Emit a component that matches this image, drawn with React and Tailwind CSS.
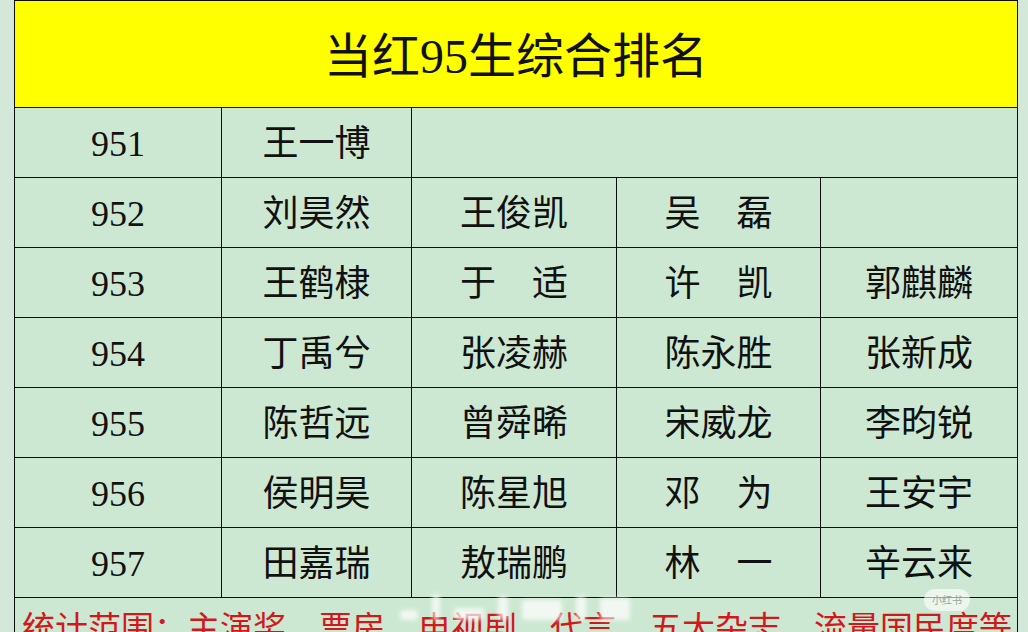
import React from 'react';

const rows = [
  ['951', '王一博'],
  ['952', '刘昊然', '王俊凯', '吴　磊', ''],
  ['953', '王鹤棣', '于　适', '许　凯', '郭麒麟'],
  ['954', '丁禹兮', '张凌赫', '陈永胜', '张新成'],
  ['955', '陈哲远', '曾舜晞', '宋威龙', '李昀锐'],
  ['956', '侯明昊', '陈星旭', '邓　为', '王安宇'],
  ['957', '田嘉瑞', '敖瑞鹏', '林　一', '辛云来'],
];

const font = { fontFamily: '"Liberation Serif", "Noto Sans CJK SC", serif' };

function Cell({ children, span }) {
  return (
    <div
      className={`h-[70px] border-l border-t border-[#0d0d0d] flex items-center justify-center pt-[3px] text-[36px] leading-none text-[#111] ${span ? 'col-span-3' : ''}`}
    >
      {children}
    </div>
  );
}

export default function App() {
  return (
    <div className="relative w-[1028px] h-[632px] overflow-hidden bg-[#d3e8d9]" style={font}>
      <div className="ml-[14px] w-[1004px] border-r border-[#0d0d0d] bg-[#cde8d2]">
        {/* title */}
        <div className="h-[107px] border-l border-t border-[#0d0d0d] bg-[#ffff00] flex items-center justify-center pt-[6px]">
          <span className="text-[48px] leading-none text-[#111]">当红95生综合排名</span>
        </div>

        {/* ranking rows */}
        <div className="grid grid-cols-[207px_190px_205px_204px_197px]">
          {rows.map((r) =>
            r.length === 2 ? (
              <React.Fragment key={r[0]}>
                <Cell>{r[0]}</Cell>
                <Cell>{r[1]}</Cell>
                <Cell span />
              </React.Fragment>
            ) : (
              r.map((v, i) => <Cell key={r[0] + i}>{v}</Cell>)
            )
          )}
        </div>

        {/* footnote, cut by the bottom edge like the screenshot */}
        <div className="h-[60px] border-l border-t border-[#0d0d0d] pl-[7px] pt-[15px]">
          <p className="text-[33px] leading-none text-[#d1191c] whitespace-nowrap">
            统计范围：主演奖、票房、电视剧、代言、五大杂志、流量国民度等
          </p>
        </div>
      </div>

      {/* watermark overlay */}
      <div className="absolute left-[400px] top-[594px] flex items-end gap-[14px] opacity-70 blur-[2px]">
        <div className="w-[18px] h-[10px] bg-white rounded-sm" />
        <div className="w-[8px] h-[26px] bg-white rounded-sm" />
        <div className="w-[30px] h-[12px] bg-white rounded-sm" />
        <div className="w-[10px] h-[24px] bg-white rounded-sm" />
        <div className="w-[40px] h-[20px] bg-white rounded-sm" />
        <div className="w-[10px] h-[24px] bg-white rounded-sm" />
        <div className="w-[30px] h-[22px] bg-white rounded-sm" />
      </div>
      <div className="absolute left-[924px] top-[589px] h-[22px] px-[8px] rounded-full bg-white/60 flex items-center">
        <span className="text-[10px] leading-none text-[#9aa59c]" style={{ fontFamily: '"Noto Sans CJK SC", sans-serif' }}>
          小红书
        </span>
      </div>
    </div>
  );
}
